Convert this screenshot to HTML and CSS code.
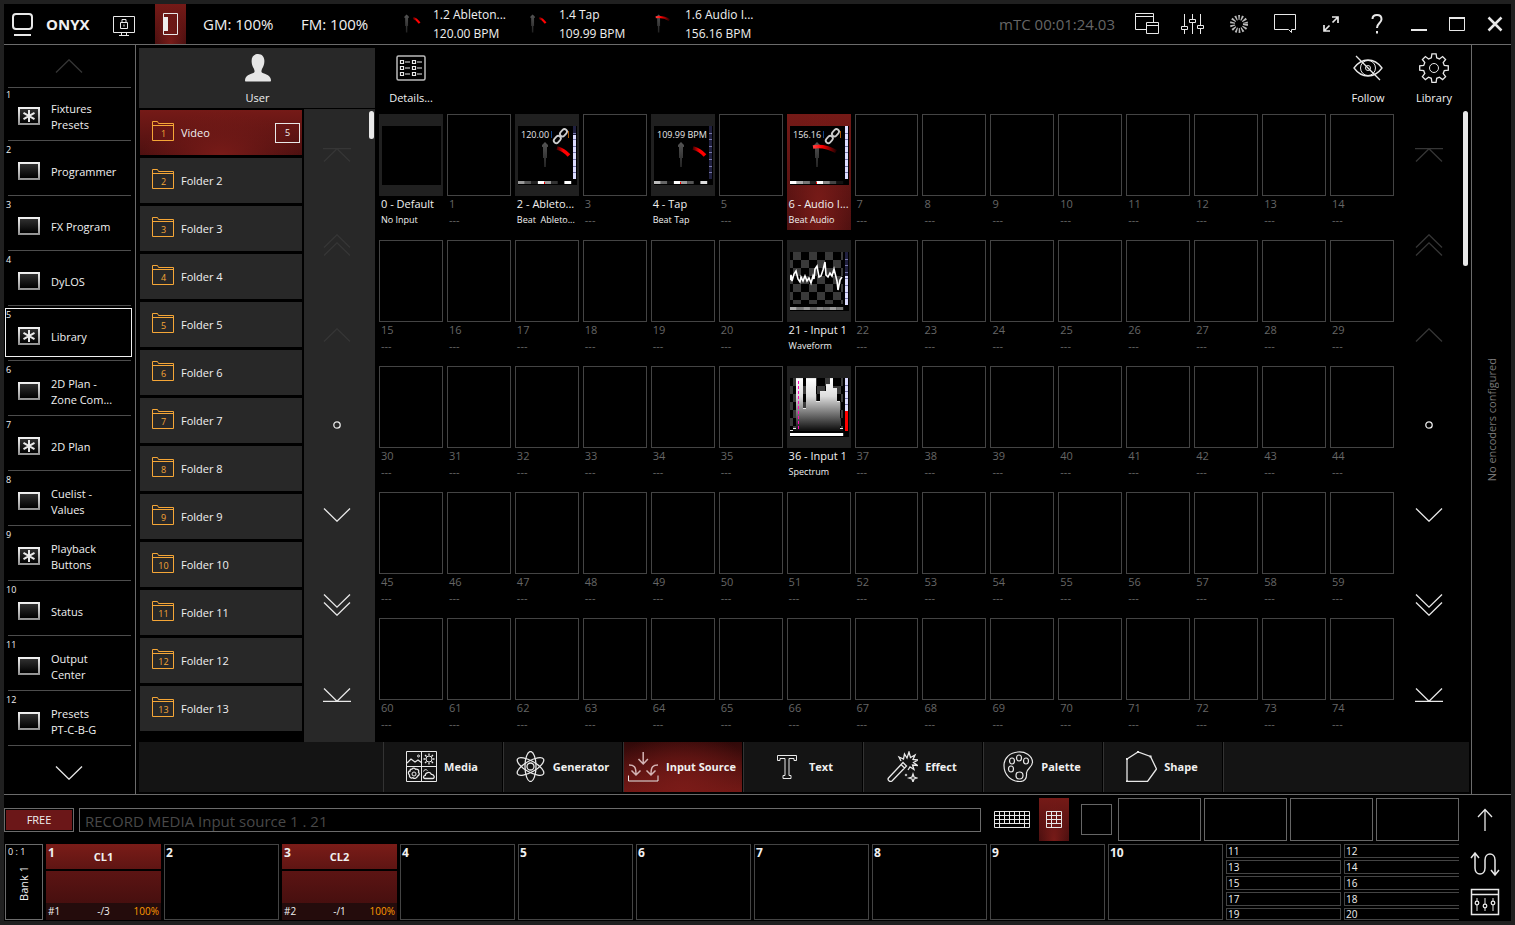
FILE: index.html
```html
<!DOCTYPE html>
<html lang="en">
<head>
<meta charset="utf-8">
<title>ONYX</title>
<link rel="stylesheet" href="styles.css">
</head>
<body>
<svg class="sprite" aria-hidden="true">
  <defs>
    <linearGradient id="metal" x1="0" y1="0" x2="0" y2="1"><stop offset="0" stop-color="#f4f4f4"/><stop offset="1" stop-color="#8f8f8f"/></linearGradient>
    <linearGradient id="glass" x1="0" y1="0" x2="0" y2="1"><stop offset="0" stop-color="#303030"/><stop offset="1" stop-color="#000"/></linearGradient>
    <linearGradient id="needle" x1="0" y1="0" x2="0" y2="1"><stop offset="0" stop-color="#555"/><stop offset="1" stop-color="#222"/></linearGradient>
    <linearGradient id="swoosh" x1="0" y1="0" x2="1" y2="0"><stop offset="0" stop-color="#400"/><stop offset="0.5" stop-color="#f00"/><stop offset="1" stop-color="#f00"/></linearGradient>
    <linearGradient id="swooshBack" x1="0" y1="0" x2="1" y2="0"><stop offset="0" stop-color="#f44"/><stop offset="0.4" stop-color="#f00"/><stop offset="1" stop-color="#200"/></linearGradient>
    <linearGradient id="spectrum" gradientUnits="userSpaceOnUse" x1="0" y1="0" x2="0" y2="52"><stop offset="0" stop-color="#fff"/><stop offset="0.35" stop-color="#ddd"/><stop offset="1" stop-color="#111"/></linearGradient>
    <pattern id="checks" width="16" height="16" patternUnits="userSpaceOnUse"><g stroke="none"><rect width="16" height="16" fill="#000"/><rect x="3" width="8" height="8" fill="#3a3a3a"/><rect x="11" y="8" width="5" height="8" fill="#3a3a3a"/><rect y="8" width="3" height="8" fill="#3a3a3a"/></g></pattern>
  </defs>
  <symbol id="i-up" viewBox="0 0 28 14"><path d="M1 13.500 14 .8 27 13.500"/></symbol>
  <symbol id="i-down" viewBox="0 0 28 14"><path d="M1 .5 14 13.200 27 .5"/></symbol>
  <symbol id="i-top" viewBox="0 0 28 14"><path d="M0 .5h28M1 13.500 14 .8 27 13.500"/></symbol>
  <symbol id="i-bottom" viewBox="0 0 28 14"><path d="M0 13.500h28M1 .5 14 13.200 27 .5"/></symbol>
  <symbol id="i-pageup" viewBox="0 0 28 22"><path d="M1 13.500 14 .8 27 13.500M1 21.500 14 8.800 27 21.500"/></symbol>
  <symbol id="i-pagedown" viewBox="0 0 28 22"><path d="M1 .5 14 13.200 27 .5M1 8.500 14 21.200 27 8.500"/></symbol>
  <symbol id="i-home" viewBox="0 0 8 8"><circle cx="4" cy="4" r="3.200"/></symbol>
  <symbol id="i-view" viewBox="0 0 22 18"><rect width="22" height="18" fill="url(#metal)" stroke="none"/><rect x="2" y="2" width="18" height="14" fill="url(#glass)" stroke="none"/></symbol>
  <symbol id="i-viewstar" viewBox="0 0 22 18"><rect width="22" height="18" fill="url(#metal)" stroke="none"/><rect x="2" y="2" width="18" height="14" fill="url(#glass)" stroke="none"/><path stroke-width="2" d="M11 3v12M5.500 5.800l11 6.400M5.500 12.200l11-6.400"/></symbol>
  <symbol id="i-folder" viewBox="0 0 22 20"><path d="M.5 19.500V.5h5l1 2h15v17zM.5 4.500h21"/></symbol>
</svg>
<div class="app">
  <header class="topbar">
    <svg class="logo" viewBox="0 0 22 24" width="22" height="24"><rect x="1" y="1" width="19" height="15" rx="3" stroke-width="2"/><path stroke-width="2" d="M2 22h17"/></svg>
    <h1 class="brand">ONYX</h1>
    <button class="bare lock" aria-label="Lock"><svg viewBox="0 0 22 20" width="22" height="20"><path d="M.5.500h21v16H.5zM8.500 16.500v3M13.500 16.500v3M6 19.500h10M7.500 6.500h7v6h-7zM9 6.500V3.500h4v3M11 8.500v2"/></svg></button>
    <button class="hot panel-toggle" aria-label="Fader panel"><svg viewBox="0 0 16 22" width="16" height="22"><path d="M.5.500h14v21H.5z"/><rect x="0" y="4" width="5" height="14" fill="#eee" stroke="none"/></svg></button>
    <span class="master gm">GM: 100%</span>
    <span class="master fm">FM: 100%</span>
    <div class="beats" id="beats"></div>
    <span class="timecode">mTC 00:01:24.03</span>
    <div class="sysicons">
      <button class="bare" aria-label="Windows"><svg viewBox="0 0 24 22" width="24" height="22"><path d="M11.500 16.500H.5V.5h18v9M.5 3.500h18M11.500 9.500h12v11h-12zM11.500 12.500h12"/></svg></button>
      <button class="bare" aria-label="Faders"><svg viewBox="0 0 24 20" width="24" height="20"><path d="M3.500 0v12M3.500 16v4M11.500 0v5M11.500 8v12M19.500 0v11M19.500 14v6M.5 12.500h6v3h-6zM8.500 5.500h6v3h-6zM16.500 11.500h6v3h-6z"/></svg></button>
      <button class="bare" aria-label="Busy"><svg viewBox="0 0 20 20" width="20" height="20"><circle cx="10" cy="10" r="6.500" stroke="#bbb" stroke-width="5" stroke-dasharray="1.500 1.417"/></svg></button>
      <button class="bare" aria-label="Messages"><svg viewBox="0 0 22 20" width="22" height="20"><path d="M.5.500h21v15h-4v3l-3-3H.5z"/></svg></button>
      <button class="bare" aria-label="Expand"><svg viewBox="0 0 16 16" width="16" height="16"><path stroke-width="1.700" d="M9 1h6v6M15 1 9.500 6.500M1 9v6h6M1 15l5.500-5.500"/></svg></button>
      <button class="bare" aria-label="Help"><svg viewBox="0 0 12 20" width="12" height="20"><path stroke-width="2" d="M1.500 5C1.500 2.500 3.500 1 6 1s4.500 1.500 4.500 4.200C10.500 9 6 9 6 14M6 17v2.500"/></svg></button>
      <button class="bare win" aria-label="Minimize"><svg viewBox="0 0 16 16" width="16" height="16"><path stroke-width="2" d="M0 14h16"/></svg></button>
      <button class="bare win" aria-label="Maximize"><svg viewBox="0 0 16 16" width="16" height="16"><path d="M.5 1v13.500h15V1"/><path stroke-width="2" d="M0 2h16"/></svg></button>
      <button class="bare win" aria-label="Close"><svg viewBox="0 0 16 16" width="16" height="16"><path stroke-width="2.500" d="M1.500 1.500l13 13M14.500 1.500l-13 13"/></svg></button>
    </div>
  </header>

  <div class="main">
    <nav class="views" aria-label="Views">
      <button class="views-up dim" aria-label="Previous views"><svg width="28" height="14"><use href="#i-up"/></svg></button>
      <div id="views"></div>
      <button class="views-down" aria-label="Next views"><svg width="28" height="14"><use href="#i-down"/></svg></button>
    </nav>

    <main class="workspace">
      <div class="upper">
        <section class="library">
          <button class="tool user"><svg viewBox="0 0 30 30" width="30" height="30"><path fill="#e6e6e6" stroke="none" d="M15 1c4 0 6.400 2.800 6.400 7 0 3.400-1 5.500-2.200 7.500-.7 1.300-.8 2.500-.7 3.500 1 2 9 2 9.500 8 0 1-.3 1.500-1 1.500H3c-.7 0-1-.5-1-1.500.5-6 8.500-6 9.500-8 .1-1 0-2.200-.7-3.500C9.600 13.500 8.600 11.400 8.600 8c0-4.200 2.400-7 6.400-7z"/></svg><span>User</span></button>
          <div class="library-body">
            <div class="folders" id="folders"></div>
            <div class="rail grey"><div class="scroller"></div><div class="bar"><div class="thumb short"></div></div></div>
          </div>
        </section>
        <section class="media">
          <div class="toolbar">
            <button class="tool"><svg viewBox="0 0 30 30" width="30" height="30"><rect x="1" y="3" width="28" height="24" rx="1.500" stroke="#bbb" stroke-width="1.500"/><path stroke-width="1.200" d="M4.500 7.500h3v3h-3zM4.500 13.500h3v3h-3zM4.500 19.500h3v3h-3zM16.500 7.500h3v3h-3zM16.500 13.500h3v3h-3zM16.500 19.500h3v3h-3zM9 9h5M9 15h5M9 21h5M21 9h5M21 15h5M21 21h5"/></svg><span>Details...</span></button>
            <button class="tool follow"><svg viewBox="0 0 30 30" width="30" height="30"><path stroke-width="1.300" d="M1 15c4-5.500 8.500-8 14-8s10 2.500 14 8c-4 5.500-8.500 8-14 8S5 20.500 1 15zM3 3l24 24"/><circle cx="15" cy="15" r="7.500"/><circle cx="15" cy="15" r="2.500"/></svg><span>Follow</span></button>
            <button class="tool"><svg viewBox="0 0 30 30" width="30" height="30"><circle cx="15" cy="15" r="4.500"/><path stroke-width="1.300" d="M12.900.800h4.200l.6 4 2.700 1.100 3.200-2.400 3 3-2.400 3.200 1.100 2.700 4 .5v4.200l-4 .6-1.100 2.700 2.400 3.200-3 3-3.200-2.400-2.700 1.100-.6 4h-4.200l-.6-4-2.700-1.100-3.200 2.400-3-3 2.400-3.200-1.100-2.700-4-.6v-4.200l4-.5 1.100-2.700-2.400-3.200 3-3 3.200 2.400 2.700-1.100z"/></svg><span>Library</span></button>
          </div>
          <div class="media-body">
            <div class="pads" id="pads"></div>
            <div class="rail wide"><div class="scroller"></div><div class="bar"><div class="thumb long"></div></div></div>
          </div>
        </section>
      </div>
      <div class="tabs" role="tablist">
        <button class="tab" role="tab"><svg viewBox="0 0 31 31" width="31" height="31"><path d="M.5.500h30v30H.5zM15.500.500v30M.5 15.500h30"/><path stroke-width="1.200" d="M1 12l4-4 4 3 3-2 4 3"/><circle cx="12.500" cy="5" r="1"/><circle cx="23" cy="8" r="3"/><path stroke-width="1.300" d="M23 2.500v2M23 11.500v2M17.500 8h2M26.500 8h2M19 4l1.500 1.500M25.500 10.500 27 12M27 4l-1.500 1.500M20.500 10.500 19 12"/><circle cx="8" cy="23" r="2"/><path stroke-width="1.300" d="M6 18c1-1.500 3-1 3.500.2 2-.5 4 1 3 3 1.500 1.500.5 3.500-1 4-.5 2-3 3-4.500 1.500-2 1-4-.5-3.500-2.500C1.500 22 2.500 20 4 20c0-1 .8-2 2-2zM19 27.500c-2 0-2-3 .3-3.200 0-3 4.500-4 6-1 3.200-.3 4 4.200 1.200 4.200z"/><path d="M17.500 20.500c.5-2 2.500-2.500 4-1"/></svg><span>Media</span></button>
        <button class="tab" role="tab"><svg viewBox="0 0 31 31" width="31" height="31"><g stroke-width="1.300"><ellipse cx="15.500" cy="15.500" rx="5.500" ry="15"/><ellipse cx="15.500" cy="15.500" rx="5.500" ry="15" transform="rotate(60 15.500 15.500)"/><ellipse cx="15.500" cy="15.500" rx="5.500" ry="15" transform="rotate(120 15.500 15.500)"/><circle cx="15.500" cy="15.500" r="3.500"/></g></svg><span>Generator</span></button>
        <button class="tab on" role="tab" aria-selected="true"><svg viewBox="0 0 31 31" width="31" height="31"><path d="M.5 24.500v5.500h29.500v-5.500"/><path stroke="#d4b4b4" stroke-width="1.500" d="M15.200 1v11M10.500 8l4.700 5 4.700-5M1 14c5 0 7 1.500 7 9M3.500 19.500 8 24l4.500-4.500M30 14c-5 0-7 1.500-7 9M18.500 19.500 23 24l4.500-4.500"/></svg><span>Input Source</span></button>
        <button class="tab" role="tab"><svg viewBox="0 0 31 31" width="31" height="31"><path d="M6.500 4.500h19v5h-2.500v-2h-5v17h2v3h-8v-3h2v-17h-5v2H6.500z"/></svg><span>Text</span></button>
        <button class="tab" role="tab"><svg viewBox="0 0 31 31" width="31" height="31"><path stroke-width="1.300" d="M1.500 27 16 11.500l3.500 3.500L5 30c-2 1.500-5-1-3.500-3zM14 13.500l3.500 3.500M14 10l-2-4 4.500 2 1-5 2.500 4L22 1l1.500 5.500L28 4l-2 4.500 5 .5-4.500 2.500 4 3-5-.5 1.500 4.500-4-2.500L21 19M26 23l1 3 3 1-3 1-1 3-1-3-3-1 3-1z"/><circle cx="19" cy="24" r=".8"/></svg><span>Effect</span></button>
        <button class="tab" role="tab"><svg viewBox="0 0 31 31" width="31" height="31"><g stroke-width="1.200"><path d="M15 1C22 .500 29 4 29.500 11c0 6-6.500 6.500-6 11.500.5 5-2 8-6.500 8C8 30.500 1 24 1 14.500 1 7 7 1.500 15 1z"/><ellipse cx="9" cy="10" rx="2.500" ry="3"/><ellipse cx="16" cy="7" rx="2.500" ry="3"/><ellipse cx="23" cy="10" rx="2.500" ry="3"/><ellipse cx="8" cy="18" rx="2.500" ry="3"/><circle cx="16.500" cy="24.500" r="3.500"/></g></svg><span>Palette</span></button>
        <button class="tab" role="tab"><svg viewBox="0 0 31 31" width="31" height="31"><path stroke-width="1.300" d="M1 8 12 1l12.500 4.500L30.500 18l-9 12.500H1z"/><path d="M0 8h2M11 1h2M23.500 5.500h2M0 30.500h2" stroke-width="2"/></svg><span>Shape</span></button>
      </div>
    </main>

    <aside class="encoders"><span>No encoders configured</span></aside>
  </div>

  <footer class="console">
    <div class="console-main">
      <div class="command">
        <button class="free">FREE</button>
        <input class="cmdline" type="text" aria-label="Command line" value="RECORD MEDIA Input source 1 . 21">
        <button class="bare keyboard" aria-label="Keyboard"><svg viewBox="0 0 36 17" width="36" height="17"><path d="M.5.500h35v16H.5zM0 4.500h36M0 8.500h36M0 12.500h36M5.500 0v17M30.500 0v17M10.500 0v12M15.500 0v12M20.500 0v12M25.500 0v12"/></svg></button>
        <button class="hot keypad" aria-label="Keypad"><svg viewBox="0 0 16 17" width="16" height="17"><path d="M.5.500h15v16H.5zM0 4.500h16M0 8.500h16M0 12.500h16M5.500 0v17M10.500 0v12.500"/></svg></button>
        <button class="square" aria-label="Macro"></button>
        <div class="macros"><button aria-label="Macro 1"></button><button aria-label="Macro 2"></button><button aria-label="Macro 3"></button><button aria-label="Macro 4"></button></div>
      </div>
      <div class="playbacks">
        <div class="bank"><span class="bank-no">0 : 1</span><span class="bank-name">Bank 1</span></div>
        <div class="slots" id="slots"></div>
      </div>
    </div>
    <div class="console-rail">
      <button class="bare" aria-label="Up"><svg viewBox="0 0 30 24" width="30" height="24"><path stroke-width="1.300" d="M15 23V2M8 9l7-7.500L22 9"/></svg></button>
      <button class="bare swap" aria-label="Swap"><svg viewBox="0 0 30 24" width="30" height="24"><path stroke-width="1.500" d="M1 6l4-5 4 5M5 1v15c0 8 10 8 10 0V8c0-8 10-8 10 0v15M21 18l4 5 4-5"/></svg></button>
      <button class="bare" aria-label="Mixer"><svg viewBox="0 0 30 28" width="30" height="28"><path stroke-width="1.500" d="M1.500 1.500h27v25h-27zM1.500 6.500h27"/><path d="M7 10v13M15 10v13M23 10v13"/><g fill="#000" stroke-width="1.300"><circle cx="7" cy="15" r="1.800"/><circle cx="15" cy="18" r="1.800"/><circle cx="23" cy="15" r="1.800"/></g></svg></button>
    </div>
  </footer>
</div>
<script src="app.js"></script>
</body>
</html>
```

FILE: styles.css
```css
* { box-sizing: border-box; }
html, body { height: 100%; }
body {
  margin: 0;
  padding: 4px;
  background: #202020;
  color: #f0f0f0;
  font: 11px/16px "Open Sans", "Noto Sans", sans-serif;
}
button { font: inherit; color: inherit; background: none; border: 0; padding: 0; text-align: left; cursor: pointer; }
svg { display: block; flex: none; fill: none; stroke: #e8e8e8; stroke-width: 1; }
svg text { stroke: none; fill: #e8e8e8; }
.sprite { position: absolute; width: 0; height: 0; }
.app { display: flex; flex-direction: column; height: 100%; min-height: 917px; background: #000; overflow: hidden; }
.bare { display: flex; align-items: center; justify-content: center; }
.hot {
  display: flex; align-items: center; justify-content: center;
  background: radial-gradient(ellipse at 50% 100%, #781b18, transparent 65%), linear-gradient(#751a17, #4d1010);
}

/* Top bar */
.topbar { display: flex; align-items: center; height: 41px; flex: none; border-bottom: 1px solid #6b6b6b; padding-left: 8px; font-size: 15px; }
.logo { margin-top: 2px; }
.brand { margin: 0 0 0 12px; width: 67px; font-size: 15px; font-weight: 700; }
.lock { margin-top: 4px; width: 22px; }
.panel-toggle { align-self: stretch; width: 31px; margin: 0 17px 0 20px; }
.master { width: 98px; white-space: nowrap; }
.fm { width: 97px; }
.beats { display: flex; font-size: 12px; line-height: 19px; }
.beat { display: flex; align-items: center; width: 126px; gap: 4px; padding-left: 5px; white-space: nowrap; }
.timecode { margin-left: auto; color: #666; white-space: nowrap; padding-right: 9px; }
.sysicons { display: flex; align-self: stretch; padding-right: 1px; margin-right: -4px; }
.sysicons .bare { width: 46px; }
.sysicons .win { width: 38px; }

/* Middle */
.main { display: flex; flex: 1; min-height: 0; border-bottom: 1px solid #6b6b6b; }
.views { width: 132px; flex: none; border-right: 1px solid #6b6b6b; display: flex; flex-direction: column; }
.views svg, .scroller svg { stroke-width: 1.3; }
.views-up { height: 43px; margin: 0 4px -2px; border-bottom: 1px solid #4d4d4d; display: flex; align-items: center; justify-content: center; padding-right: 1px; }
.views-down { flex: 1; display: flex; align-items: center; justify-content: center; padding: 6px 1px 0 0; }
.view { position: relative; display: flex; align-items: center; width: 100%; height: 55px; padding: 4px 4px 0 14px; gap: 11px; line-height: 16px; }
.view::after { content: ""; position: absolute; left: 4px; right: 4px; bottom: 0; height: 1px; background: #4d4d4d; }
.view.on::before { content: ""; position: absolute; inset: 2px 3px 4px 1px; border: 1px solid #f0f0f0; }
.view .no { position: absolute; left: 2px; top: 3px; font-size: 9px; line-height: 12px; }
.view .label { white-space: pre-line; padding-top: 3px; }
.views .dim svg, .scroller .dim svg { stroke: #363636; }

.workspace { flex: 1; min-width: 0; display: flex; flex-direction: column; padding: 3px 2px 2px 3px; }
.upper { display: flex; flex: 1; min-height: 0; }
.library { width: 236px; flex: none; display: flex; flex-direction: column; }
.tool { display: flex; flex-direction: column; align-items: center; gap: 7px; width: 66px; height: 60px; padding-top: 5px; white-space: nowrap; }
.tool.user { width: 100%; background: #282828; padding-left: 1px; }
.library-body { display: flex; flex: 1; min-height: 0; padding-top: 1px; }
.folders { flex: 1; display: flex; flex-direction: column; gap: 3px; padding: 1px 2px 0 1px; }
.folder { display: flex; align-items: center; height: 45px; background: #282828; padding: 0 2px 0 12px; gap: 7px; }
.folder.on { background: radial-gradient(ellipse at 50% 100%, #781b18, transparent 70%), linear-gradient(#751a17, #4d1010); }
.folder svg { stroke: #f5a637; margin-bottom: 4px; }
.folder text { font-size: 9px; fill: #f5a637; text-anchor: middle; }
.count { margin-left: auto; width: 25px; height: 20px; border: 1px solid #e8e8e8; font-size: 9px; line-height: 18px; text-align: center; }
.rail { display: flex; flex: none; width: 71px; }
.rail.grey { background: #282828; }
.rail.wide { width: 75px; padding-top: 1px; }
.scroller { flex: 1; display: flex; flex-direction: column; padding-top: 1px; }
.scroller button { height: 90px; display: flex; align-items: center; justify-content: center; }
.bar { width: 6px; padding-top: 2px; }
.thumb { width: 5px; border-radius: 3px; background: #e8e8e8; }
.thumb.short { height: 28px; }
.thumb.long { height: 155px; }

.media { flex: 1; min-width: 0; display: flex; flex-direction: column; }
.toolbar { display: flex; padding: 0 2px 0 3px; }
.follow { margin-left: auto; }
.media-body { display: flex; flex: 1; min-height: 0; }
.pads { flex: 1; display: grid; grid-template-columns: repeat(15, minmax(0, 1fr)); gap: 10px 4px; align-content: start; padding: 6px 0 0 4px; }
.pad { display: flex; flex-direction: column; height: 116px; white-space: nowrap; overflow: hidden; }
.pad .face { width: 100%; height: 82px; border: 1px solid #444; }
.pad .name { padding-left: 2px; }
.pad .kind { padding-left: 2px; font-size: 9px; }
.pad.empty { color: #666; }
.pad.empty .kind { font-size: 11px; }
.pad.filled .face { border: 0; background: #202020; padding: 12px 3px; }
.pad.on { background: radial-gradient(ellipse at 50% 80%, #781b18, transparent 75%), linear-gradient(#751a17, #4d1010); }
.pad.on .face { background: none; }
.pad text { font-size: 9px; }

.tabs { display: flex; flex: none; height: 50px; padding-left: 244px; background: #141414; }
.tab { display: flex; align-items: center; justify-content: center; gap: 7px; width: 120px; padding: 0 2px 1px 0; border-left: 1px solid #333; border-right: 1px solid #000; font-weight: 700; white-space: nowrap; }
.tab:last-child { box-shadow: 1px 0 #333; }
.tab.on { background: radial-gradient(ellipse at 50% 100%, #7a1b18, transparent 90%), linear-gradient(#300909, #701815); }

.encoders { width: 40px; flex: none; border-left: 1px solid #6b6b6b; display: flex; align-items: center; justify-content: center; color: #777; }
.encoders span { writing-mode: vertical-rl; transform: rotate(180deg); white-space: nowrap; }

/* Console */
.console { display: flex; flex: none; padding: 3px 0 1px; }
.console-main { flex: 1; min-width: 0; display: flex; flex-direction: column; gap: 3px; }
.command { display: flex; align-items: center; height: 43px; padding-right: 1px; }
.free { width: 70px; height: 24px; margin-right: 5px; border: 1px solid #6b6b6b; background: #6b1718; background-clip: content-box; padding: 1px; text-align: center; line-height: 20px; }
.cmdline { flex: 1; min-width: 0; height: 24px; padding: 2px 5px 0; background: #000; border: 1px solid #6b6b6b; color: #484848; font: 15px/20px "Open Sans", "Noto Sans", sans-serif; }
.keyboard { width: 36px; margin: 0 9px 0 13px; }
.keypad { width: 30px; height: 43px; }
.square { width: 31px; height: 31px; margin: 0 6px 0 12px; border: 1px solid #666; }
.macros { display: flex; gap: 3px; }
.macros button { width: 83px; height: 43px; border: 1px solid #666; }
.playbacks { display: flex; gap: 3px; height: 76px; padding: 0 1px; }
.bank { width: 38px; flex: none; border: 1px solid #6b6b6b; display: flex; flex-direction: column; align-items: center; gap: 7px; }
.bank-no { font-size: 9px; line-height: 14px; align-self: flex-start; padding-left: 2px; }
.bank-name { writing-mode: vertical-rl; transform: rotate(180deg); white-space: nowrap; }
.slots { flex: 1; display: grid; grid-template-columns: repeat(12, minmax(0, 1fr)); gap: 3px; }
.slot { display: flex; flex-direction: column; border: 1px solid #444; padding: 0 1px; font-size: 12px; font-weight: 700; line-height: 16px; }
.slot.live { border: 0; padding: 0; gap: 2px; }
.slot-head { display: grid; grid-template-columns: 1fr auto 1fr; height: 25px; padding: 1px 2px; background: linear-gradient(#7a1c18, #5f1513); }
.slot-title { padding-top: 4px; font-size: 11px; }
.slot-body { flex: 1; background: linear-gradient(#5c1413, #3c0d0d); display: flex; flex-direction: column; justify-content: flex-end; }
.slot-foot { display: grid; grid-template-columns: 1fr auto 1fr; padding: 0 2px; height: 17px; background: #240c0c; font-weight: 400; font-size: 10px; }
.level { text-align: right; color: #ff9a00; }
.minis { display: flex; flex-direction: column; gap: 2px; overflow: hidden; }
.mini { flex: none; height: 14px; border: 1px solid #444; padding-left: 1px; font-size: 10px; line-height: 12px; }
.mini:last-child { height: 12px; line-height: 10px; }
.minis.cut .mini { border-right: 0; }
.console-rail { width: 51px; flex: none; display: flex; flex-direction: column; align-items: center; gap: 12px; padding: 10px 2px 0 0; }
.swap { margin-top: 8px; }
```

FILE: app.js
```js
const el = id => document.getElementById(id);
const use = (name, w, h) => `<svg width="${w}" height="${h}"><use href="#${name}"/></svg>`;

// Beat indicators in the top bar
const pin = (x, y) => `<path stroke="none" fill="url(#needle)" d="M${x} ${y}l3 3v2h-1v11h-1v9h-2v-9h-1v-11h-1v-2z"/>`;
const swoosh = ahead => ahead
  ? '<path stroke="url(#swoosh)" stroke-width="3.500" d="M39 22c4 1 8 3 12 7.500"/>'
  : '<path stroke="url(#swooshBack)" stroke-width="3.500" d="M23 21c8-1.500 15 0 23 4.500"/>';
const smallSwoosh = ahead => ahead
  ? '<path stroke="url(#swoosh)" stroke-width="3" d="M36 19c4 1 6 3 9 7"/>'
  : '<path stroke="url(#swooshBack)" stroke-width="3" d="M23 18c7-1 13 0 19 4"/>';
el('beats').innerHTML = [
  ['1.2 Ableton...', '120.00 BPM', true],
  ['1.4 Tap', '109.99 BPM', true],
  ['1.6 Audio I...', '156.16 BPM', false]
].map(([name, bpm, ahead]) => `<div class="beat"><svg viewBox="22 8 36 40" width="26" height="29">${pin(27, 14)}${smallSwoosh(ahead)}</svg><div>${name}<br>${bpm}</div></div>`).join('');

// View buttons
el('views').innerHTML = [
  ['Fixtures\nPresets', 1], ['Programmer'], ['FX Program'], ['DyLOS'], ['Library', 1, 1],
  ['2D Plan -\nZone Com...'], ['2D Plan', 1], ['Cuelist -\nValues'], ['Playback\nButtons', 1],
  ['Status'], ['Output\nCenter'], ['Presets\nPT-C-B-G']
].map(([label, star, on], i) => `<button class="view${on ? ' on' : ''}"><span class="no">${i + 1}</span>${use(star ? 'i-viewstar' : 'i-view', 22, 18)}<span class="label">${label}</span></button>`).join('');

// Folders
el('folders').innerHTML = Array.from({ length: 13 }, (_, i) => {
  const n = i + 1;
  return `<button class="folder${i ? '' : ' on'}"><svg viewBox="0 0 22 20" width="22" height="20"><use href="#i-folder"/><text x="11.500" y="15.500">${n}</text></svg><span>${i ? 'Folder ' + n : 'Video'}</span>${i ? '' : '<span class="count">5</span>'}</button>`;
}).join('');

// Scroll buttons
document.querySelectorAll('.scroller').forEach(s => {
  s.innerHTML = [
    ['i-top', 'Top', 14, 1], ['i-pageup', 'Page up', 22, 1], ['i-up', 'Up', 14, 1], ['i-home', 'Home', 8],
    ['i-down', 'Down', 14], ['i-pagedown', 'Page down', 22], ['i-bottom', 'Bottom', 14]
  ].map(([icon, label, h, dim]) => `<button class="${dim ? 'dim' : ''}" aria-label="${label}">${use(icon, h === 8 ? 8 : 28, h)}</button>`).join('');
});

// Pad thumbnails
const thumb = inner => `<svg viewBox="0 0 59 59" width="59" height="59"><rect width="59" height="59" fill="#000" stroke="none"/>${inner}</svg>`;
const meter = (from, color = '#dcdcff') => `<g stroke="none"><rect x="55" width="3" height="53" fill="#202040"/><rect x="55" y="${from}" width="3" height="${53 - from}" fill="${color}"/></g><path stroke="#77a" d="M55 7.500h3M55 13.500h3M55 20.500h3M55 26.500h3M55 33.500h3M55 40.500h3M55 46.500h3"/>`;
const steps = shades => shades.map((c, i) => `<rect x="${i * 53 / shades.length}" y="55" width="${53 / shades.length + 0.2}" height="3" fill="${c}" stroke="none"/>`).join('');
const link = '<g stroke="#ccc" stroke-width="1.800"><rect x="-3.500" y="-2.300" width="8" height="5" rx="2.500" transform="translate(45 7) rotate(-48)"/><rect x="-4.500" y="-2.300" width="8" height="5" rx="2.500" transform="translate(39.500 13) rotate(-48)"/></g><path stroke="#148" d="M33.500 5v7"/><path stroke="#a50" d="M50.500 5v7"/>';
const beat = (bpm, linked, ahead, from, shades) => thumb(
  `<text x="3" y="12">${bpm}</text>${linked ? link : ''}${pin(27, 16)}${swoosh(ahead)}${meter(from)}${steps(shades)}<path stroke="#f00" d="M26.500 56v2"/>`);
const bars = [[0, 52, 3], [3, 50, 3], [6, 0, 7], [13, 30, 3], [16, 0, 10], [26, 23, 4], [30, 13, 6], [36, 6, 4], [40, 0, 3], [43, 10, 4], [47, 23, 3], [50, 50, 3]];
const pads = {
  0: ['0 - Default', 'No Input', thumb('')],
  2: ['2 - Ableto...', 'Beat&nbsp; Ableto...', beat('120.00', true, true, 9, ['#999', '#555', '#222', '#fff', '#999', '#333', '#000', '#fff'])],
  4: ['4 - Tap', 'Beat Tap', beat('109.99 BPM', false, true, 53, ['#bbb', '#666', '#111', '#fff', '#999', '#555', '#000', '#ddd'])],
  6: ['6 - Audio I...', 'Beat Audio', beat('156.16', true, false, 0, ['#fff', '#aaa', '#777', '#222', '#fff', '#888', '#444', '#111'])],
  21: ['21 - Input 1', 'Waveform', thumb(`<rect width="53" height="52" fill="url(#checks)" stroke="none"/><polyline stroke="#fff" stroke-width="1.600" points="0,28 1,23 2,29 4,22 6,19 8,27 10,30 11,25 13,29 15,24 17,29 19,26 21,31 23,24 24,27 25,17 27,14 29,25 31,24 33,18 35,10 36,23 38,25 40,21 42,24 44,17 46,25 47,29 48,38 50,28 52,25"/>${meter(24)}${steps(['#aaa', '#777', '#999', '#666', '#888', '#777', '#999', '#777'])}`)],
  36: ['36 - Input 1', 'Spectrum', thumb(`<rect width="53" height="52" fill="url(#checks)" stroke="none"/>${bars.map(([x, y, w]) => `<rect x="${x}" y="${y}" width="${w}" height="${53 - y}" fill="url(#spectrum)" stroke="none"/><path d="M${x} ${y + 0.5}h${w}"/>`).join('')}<path stroke="#f0b" stroke-dasharray="3 2" d="M8.500 3v50"/>${meter(0)}<rect x="55" y="33" width="3" height="20" fill="#f00" stroke="none"/>${steps(['#fff'])}`)]
};
el('pads').innerHTML = Array.from({ length: 75 }, (_, n) => {
  const [name, kind, face] = pads[n] || [n, '---', ''];
  return `<button class="pad ${pads[n] ? 'filled' : 'empty'}${n === 6 ? ' on' : ''}"><span class="face">${face}</span><span class="name">${name}</span><span class="kind">${kind}</span></button>`;
}).join('');

// Playback slots
const live = { 1: ['CL1', '#1', '-/3'], 3: ['CL2', '#2', '-/1'] };
const slots = Array.from({ length: 10 }, (_, i) => {
  const n = i + 1;
  if (!live[n]) return `<div class="slot">${n}</div>`;
  const [title, no, cue] = live[n];
  return `<div class="slot live"><div class="slot-head"><span>${n}</span><span class="slot-title">${title}</span></div><div class="slot-body"><div class="slot-foot"><span>${no}</span><span>${cue}</span><span class="level">100%</span></div></div></div>`;
});
const minis = (first, cut) => `<div class="minis${cut}">${[0, 2, 4, 6, 8].map(k => `<div class="mini">${first + k}</div>`).join('')}</div>`;
el('slots').innerHTML = slots.join('') + minis(11, '') + minis(12, ' cut');
```
